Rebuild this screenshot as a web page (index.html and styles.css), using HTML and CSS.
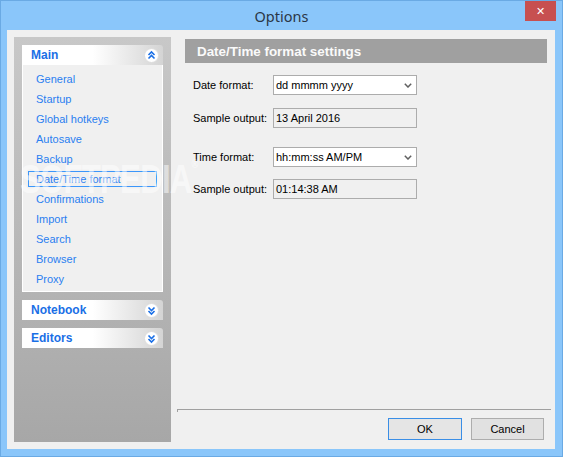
FILE: index.html
```html
<!DOCTYPE html>
<html>
<head>
<meta charset="utf-8">
<link rel="stylesheet" href="styles.css">
</head>
<body>
<div class="window">
  <div class="titlebar">
    <div></div>
    <div class="title">Options</div>
    <div class="close">&#x2715;</div>
  </div>
  <div class="client">
    <div class="sidebar">
      <div class="cat-header">
        <span>Main</span>
        <svg class="chev" width="15" height="15" viewBox="0 0 15 15"><circle cx="7.5" cy="7.5" r="7" fill="#fff" stroke="#dcdcdc"/><polyline points="4.5,7 7.5,4 10.5,7" fill="none" stroke="#1a6fe6" stroke-width="1.6"/><polyline points="4.5,10.5 7.5,7.5 10.5,10.5" fill="none" stroke="#1a6fe6" stroke-width="1.6"/></svg>
      </div>
      <div class="cat-list">
        <div class="item"><span>General</span></div>
        <div class="item"><span>Startup</span></div>
        <div class="item"><span>Global hotkeys</span></div>
        <div class="item"><span>Autosave</span></div>
        <div class="item"><span>Backup</span></div>
        <div class="item selected"><span>Date/Time format</span></div>
        <div class="item"><span>Confirmations</span></div>
        <div class="item"><span>Import</span></div>
        <div class="item"><span>Search</span></div>
        <div class="item"><span>Browser</span></div>
        <div class="item"><span>Proxy</span></div>
      </div>
      <div class="cat-header closed">
        <span>Notebook</span>
        <svg class="chev" width="15" height="15" viewBox="0 0 15 15"><circle cx="7.5" cy="7.5" r="7" fill="#fff" stroke="#dcdcdc"/><polyline points="4.5,4.5 7.5,7.5 10.5,4.5" fill="none" stroke="#1a6fe6" stroke-width="1.6"/><polyline points="4.5,8 7.5,11 10.5,8" fill="none" stroke="#1a6fe6" stroke-width="1.6"/></svg>
      </div>
      <div class="cat-header closed">
        <span>Editors</span>
        <svg class="chev" width="15" height="15" viewBox="0 0 15 15"><circle cx="7.5" cy="7.5" r="7" fill="#fff" stroke="#dcdcdc"/><polyline points="4.5,4.5 7.5,7.5 10.5,4.5" fill="none" stroke="#1a6fe6" stroke-width="1.6"/><polyline points="4.5,8 7.5,11 10.5,8" fill="none" stroke="#1a6fe6" stroke-width="1.6"/></svg>
      </div>
      <div class="watermark">SOFTPEDIA<sup>&#174;</sup></div>
    </div>
    <div class="main">
      <div class="section-title">Date/Time format settings</div>
      <div class="form">
        <div class="row r1">
          <div class="label">Date format:</div>
          <div class="field combo"><span>dd mmmm yyyy</span><svg width="8" height="5" viewBox="0 0 8 5"><polyline points="0.8,0.8 4,4 7.2,0.8" fill="none" stroke="#606060" stroke-width="1.5"/></svg></div>
        </div>
        <div class="row r2">
          <div class="label">Sample output:</div>
          <div class="field readonly">13 April 2016</div>
        </div>
        <div class="row r3">
          <div class="label">Time format:</div>
          <div class="field combo"><span>hh:mm:ss AM/PM</span><svg width="8" height="5" viewBox="0 0 8 5"><polyline points="0.8,0.8 4,4 7.2,0.8" fill="none" stroke="#606060" stroke-width="1.5"/></svg></div>
        </div>
        <div class="row r4">
          <div class="label">Sample output:</div>
          <div class="field readonly">01:14:38 AM</div>
        </div>
      </div>
      <div class="spacer"></div>
      <div class="separator"></div>
      <div class="buttons">
        <div class="btn default">OK</div>
        <div class="btn cancel">Cancel</div>
      </div>
    </div>
  </div>
</div>
</body>
</html>
```
FILE: styles.css
```css
html, body {
  margin: 0;
  padding: 0;
}
body {
  width: 563px;
  height: 457px;
  overflow: hidden;
  font-family: "Liberation Sans", Arial, sans-serif;
  font-size: 11px;
}
.window {
  width: 563px;
  height: 457px;
  box-sizing: border-box;
  border: 1px solid #6aaae4;
  background: #8ac6fa;
  display: flex;
  flex-direction: column;
}
.titlebar {
  height: 29px;
  display: grid;
  grid-template-columns: 1fr auto 1fr;
  align-items: center;
}
.title {
  font-family: "Noto Sans", "Open Sans", sans-serif;
  font-size: 14.5px;
  color: #2a3646;
  padding-top: 1px;
}
.close {
  justify-self: end;
  align-self: start;
  width: 31px;
  height: 20px;
  margin-right: 6px;
  background: #c75050;
  color: #fff;
  font-size: 11px;
  font-weight: bold;
  display: flex;
  align-items: center;
  justify-content: center;
  font-family: "DejaVu Sans", sans-serif;
}
.client {
  flex: 1;
  margin: 0 7px 7px 6px;
  background: #f0f0f0;
  display: flex;
}
.sidebar {
  position: relative;
  width: 157px;
  margin: 7px 0 7px 7px;
  padding: 8px;
  box-sizing: border-box;
  background: linear-gradient(to bottom, #c8c8c8, #a7a7a7);
  display: flex;
  flex-direction: column;
  gap: 8px;
}
.cat-header {
  height: 20px;
  flex: none;
  display: flex;
  align-items: center;
  justify-content: space-between;
  padding: 0 4px 0 9px;
  background: linear-gradient(to right, #ffffff 50%, #d4d4d4 100%);
  border-top-right-radius: 3px;
  color: #1a6fe6;
  font-weight: bold;
  font-size: 12px;
}
.cat-header .chev {
  display: block;
}
.cat-list {
  margin-top: -8px;
  background: #f0f0f0;
  border: 1px solid #ffffff;
  border-top: none;
  padding: 4px 0 2px 0;
  flex: none;
}
.item {
  height: 20px;
  display: flex;
  align-items: center;
}
.item span {
  display: block;
  flex: 1;
  height: 14px;
  line-height: 14px;
  margin: 0 5px;
  padding-left: 7px;
  border: 1px solid transparent;
  color: #2a7ff0;
}
.item.selected span {
  border-color: #3b96fa;
}
.watermark {
  position: absolute;
  left: 6px;
  top: 120px;
  font-family: "Liberation Sans", Arial, sans-serif;
  font-weight: bold;
  font-size: 40px;
  letter-spacing: -1px;
  color: rgba(255, 255, 255, 0.5);
  transform: scaleX(0.78);
  transform-origin: left top;
  pointer-events: none;
  white-space: nowrap;
}
.watermark sup {
  font-size: 12px;
  vertical-align: top;
}
.main {
  width: 374px;
  margin-left: 6px;
  display: flex;
  flex-direction: column;
}
.section-title {
  margin: 9px 4px 0 8px;
  height: 24px;
  background: #a0a0a0;
  color: #fafafa;
  font-weight: bold;
  font-size: 13.4px;
  padding-left: 12px;
  display: flex;
  align-items: center;
}
.form {
  padding-left: 16px;
}
.row {
  display: flex;
  align-items: center;
  height: 20px;
  color: #000;
}
.r1 { margin-top: 12px; }
.r2 { margin-top: 13px; }
.r3 { margin-top: 19px; }
.r4 { margin-top: 12px; }
.label {
  width: 80px;
}
.field {
  width: 144px;
  height: 20px;
  box-sizing: border-box;
  border: 1px solid #acacac;
  padding: 0 4px 0 2px;
  display: flex;
  align-items: center;
  justify-content: space-between;
}
.combo {
  background: #ffffff;
}
.readonly {
  background: #f0f0f0;
}
.spacer {
  flex: 1;
}
.separator {
  height: 3px;
  box-sizing: border-box;
  border-top: 1px solid #a0a0a0;
  border-left: 1px solid #a0a0a0;
}
.buttons {
  display: flex;
  justify-content: flex-end;
  gap: 9px;
  padding: 6px 7px 9px 0;
}
.btn {
  height: 22px;
  box-sizing: border-box;
  display: flex;
  align-items: center;
  justify-content: center;
  color: #000;
}
.btn.default {
  width: 74px;
  border: 1px solid #3a8ee6;
  background: #e5e5e5;
}
.btn.cancel {
  width: 73px;
  border: 1px solid #adadad;
  background: #e1e1e1;
}
```
